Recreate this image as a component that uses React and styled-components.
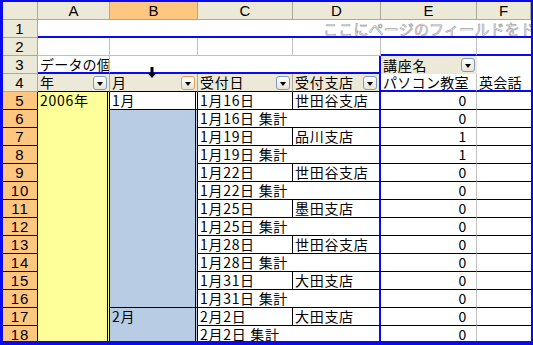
import React from 'react';
import styled, { createGlobalStyle } from 'styled-components';

const BLUE = '#0a0aef';
const GRID = '#c0c0c0';
const FACE = '#ece9d8';
const FACE_LINE = '#aca899';
const PICKED = '#ffc680';
const PICKED_LINE = '#00007a';

const GlobalStyle = createGlobalStyle`
  html, body {
    margin: 0;
    padding: 0;
    background: #fff;
  }
  body {
    font-family: "Noto Sans CJK JP", "Liberation Sans", sans-serif;
  }
`;

const Frame = styled.div`
  width: 533px;
  height: 345px;
  box-sizing: border-box;
  border-style: solid;
  border-color: ${BLUE};
  border-width: 2px 2px 4px 3px;
  overflow: hidden;
  background: #fff;
`;

const Sheet = styled.div`
  position: relative;
  display: grid;
  grid-template-columns: 35px 72px 88px 95px 88px 96px 54px;
  grid-auto-rows: 18px;
  font-size: 14px;
  line-height: 17px;
  letter-spacing: 0.7px;
  color: #000;

  & > * {
    box-sizing: border-box;
    overflow: hidden;
    white-space: nowrap;
  }
`;

const ColHead = styled.div`
  background: ${({ $active }) => ($active ? PICKED : FACE)};
  border-right: 1px solid ${FACE_LINE};
  border-bottom: 1px solid ${FACE_LINE};
  text-align: center;
  font-family: "Liberation Sans", sans-serif;
  font-size: 15px;
  letter-spacing: 0;
`;

const RowHead = styled.div`
  background: ${({ $active }) => ($active ? PICKED : FACE)};
  border-right: 1px solid ${({ $active }) => ($active ? PICKED_LINE : FACE_LINE)};
  border-bottom: 1px solid ${({ $active }) => ($active ? PICKED_LINE : FACE_LINE)};
  text-align: center;
  font-family: "Liberation Sans", sans-serif;
  font-size: 15px;
  letter-spacing: 1px;
`;

const PageDrop = styled.div`
  grid-column: 2 / -1;
  border-bottom: 2px solid ${BLUE};
  padding-left: 285px;
  font-size: 15px;
  letter-spacing: 0.2px;
  color: #fff;
  -webkit-text-stroke: 0.7px #a8a8a8;
`;

const GridCell = styled.div`
  background: #fff;
  border-right: ${({ $right }) => $right ?? `1px solid ${GRID}`};
  border-bottom: ${({ $bottom }) => $bottom ?? `1px solid ${GRID}`};
`;

const DataLabel = styled.div`
  padding-left: 2px;
  letter-spacing: 0.2px;
  border-right: 1px solid ${GRID};
  border-bottom: 2px solid ${BLUE};
`;

const FieldCell = styled.div`
  display: flex;
  align-items: center;
  justify-content: space-between;
  padding: 0 2px 0 2px;
  background: ${FACE};
  border-right: ${({ $right }) => $right ?? `1px solid ${FACE_LINE}`};
  border-bottom: ${({ $bottom }) => $bottom ?? '1px solid #000'};
`;

const DropButton = styled.span`
  position: relative;
  flex: none;
  width: 14px;
  height: 14px;
  box-sizing: border-box;
  border: 1px solid ${({ $hot }) => ($hot ? '#e5a050' : '#7f9db9')};
  border-radius: 3px;
  background: linear-gradient(#ffffff, #e6e3d6);

  &::after {
    content: '';
    position: absolute;
    left: 3px;
    top: 5px;
    border-left: 3.5px solid transparent;
    border-right: 3.5px solid transparent;
    border-top: 4px solid #000;
  }
`;

const ColumnLabel = styled.div`
  padding-left: 2px;
  letter-spacing: 0.3px;
  background: #fff;
  border-right: ${({ $right }) => $right ?? 'none'};
  border-bottom: 2px solid ${BLUE};
`;

const YearCell = styled.div`
  padding-left: 2px;
  background: #ffff99;
  border-right: 3px double #000;
`;

const MonthCell = styled.div`
  padding-left: 2px;
  background: ${({ $current }) => ($current ? '#fff' : '#b8cce4')};
  border-right: 3px double #000;
  border-bottom: ${({ $closed }) => ($closed ? '1px solid #000' : 'none')};
`;

const DateCell = styled.div`
  grid-column: span ${({ $total }) => ($total ? 2 : 1)};
  padding-left: 2px;
  background: #fff;
  border-right: ${({ $total }) => ($total ? `2px solid ${BLUE}` : '1px solid #000')};
  border-bottom: 1px solid #000;
`;

const BranchCell = styled.div`
  padding-left: 2px;
  background: #fff;
  border-right: 2px solid ${BLUE};
  border-bottom: 1px solid #000;
`;

const ValueCell = styled.div`
  padding-right: 9px;
  text-align: right;
  background: #fff;
  border-right: 1px solid ${GRID};
  border-bottom: 1px solid #000;
`;

const TailCell = styled.div`
  background: #fff;
  border-bottom: 1px solid #000;
`;

const DragCursor = styled.svg`
  position: absolute;
  left: 144px;
  top: 65px;
  width: 10px;
  height: 12px;
`;

const entries = [
  { date: '1月16日', branch: '世田谷支店', value: 0 },
  { date: '1月16日 集計', value: 0 },
  { date: '1月19日', branch: '品川支店', value: 1 },
  { date: '1月19日 集計', value: 1 },
  { date: '1月22日', branch: '世田谷支店', value: 0 },
  { date: '1月22日 集計', value: 0 },
  { date: '1月25日', branch: '墨田支店', value: 0 },
  { date: '1月25日 集計', value: 0 },
  { date: '1月28日', branch: '世田谷支店', value: 0 },
  { date: '1月28日 集計', value: 0 },
  { date: '1月31日', branch: '大田支店', value: 0 },
  { date: '1月31日 集計', value: 0 },
  { date: '2月2日', branch: '大田支店', value: 0 },
  { date: '2月2日 集計', value: 0 },
];

const months = { 0: '1月', 12: '2月' };

const App = () => {
  const blueEdge = `2px solid ${BLUE}`;

  return (
    <>
      <GlobalStyle />
      <Frame>
        <Sheet>
          <ColHead />
          <ColHead>A</ColHead>
          <ColHead $active>B</ColHead>
          <ColHead>C</ColHead>
          <ColHead>D</ColHead>
          <ColHead>E</ColHead>
          <ColHead>F</ColHead>

          <RowHead>1</RowHead>
          <PageDrop>ここにページのフィールドをドラッグします</PageDrop>

          <RowHead>2</RowHead>
          <GridCell />
          <GridCell />
          <GridCell />
          <GridCell />
          <GridCell $bottom={blueEdge} />
          <GridCell $right="none" $bottom={blueEdge} />

          <RowHead>3</RowHead>
          <DataLabel>データの個</DataLabel>
          <GridCell $right="none" $bottom={blueEdge} />
          <GridCell $right="none" $bottom={blueEdge} />
          <GridCell $right={blueEdge} $bottom={blueEdge} />
          <FieldCell $right="none" $bottom="none">
            講座名
            <DropButton />
          </FieldCell>
          <GridCell $right="none" $bottom="none" />

          <RowHead>4</RowHead>
          <FieldCell>
            年
            <DropButton />
          </FieldCell>
          <FieldCell>
            月
            <DropButton $hot />
          </FieldCell>
          <FieldCell>
            受付日
            <DropButton />
          </FieldCell>
          <FieldCell $right={blueEdge}>
            受付支店
            <DropButton />
          </FieldCell>
          <ColumnLabel $right={`1px solid ${GRID}`}>パソコン教室</ColumnLabel>
          <ColumnLabel>英会話</ColumnLabel>

          {entries.map((entry, i) => (
            <React.Fragment key={i}>
              <RowHead $active>{i + 5}</RowHead>
              <YearCell>{i === 0 ? '2006年' : ''}</YearCell>
              <MonthCell $current={i === 0} $closed={i === 0 || i === 11}>
                {months[i] || ''}
              </MonthCell>
              {entry.branch ? (
                <>
                  <DateCell>{entry.date}</DateCell>
                  <BranchCell>{entry.branch}</BranchCell>
                </>
              ) : (
                <DateCell $total>{entry.date}</DateCell>
              )}
              <ValueCell>{entry.value}</ValueCell>
              <TailCell />
            </React.Fragment>
          ))}

          <DragCursor viewBox="0 0 10 12">
            <path d="M3.5 0 H6.5 V6 H9.5 L5 11 L0.5 6 H3.5 Z" fill="#000" />
          </DragCursor>
        </Sheet>
      </Frame>
    </>
  );
};

export default App;
